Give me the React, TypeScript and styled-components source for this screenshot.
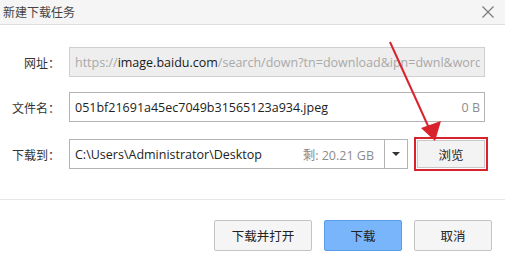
import React from "react";
import styled, { createGlobalStyle } from "styled-components";

const Global = createGlobalStyle`
  html, body { margin: 0; padding: 0; background: #fff; }
  body { font-family: "Open Sans", "Noto Sans CJK SC", sans-serif; color: #333; }
  * { box-sizing: border-box; }
`;

const Dialog = styled.div`
  position: relative;
  width: 505px;
  height: 270px;
  background: #fff;
  overflow: hidden;
`;

const TitleBar = styled.div`
  height: 25px;
  background: #f5f5f5;
  border-bottom: 1px solid #dedede;
  display: flex;
  align-items: center;
  justify-content: space-between;
  padding: 0 11px 1px 3px;
`;

const Title = styled.div`
  font-family: "Noto Sans CJK SC", sans-serif;
  font-size: 12px;
  color: #444;
`;

const Close = styled.svg`
  width: 12px;
  height: 12px;
  display: block;
`;

const Form = styled.div`
  display: grid;
  grid-template-columns: 60px minmax(0, 1fr);
  column-gap: 9px;
  row-gap: 15px;
  padding: 22px 20px 0 0;
  height: 174px;
  align-content: start;
`;

const Label = styled.div`
  font-family: "Noto Sans CJK SC", sans-serif;
  font-size: 12px;
  color: #333;
  text-align: right;
  align-self: center;
  white-space: nowrap;
`;

const FieldRow = styled.div`
  display: flex;
  gap: 6px;
  align-items: center;
  min-width: 0;
`;

const Field = styled.div<{ $disabled?: boolean; $width?: number }>`
  height: 30px;
  ${(p) => (p.$width ? `width: ${p.$width}px; flex: none;` : "flex: 1; min-width: 0;")}
  border: 1px solid ${(p) => (p.$disabled ? "#cfcfcf" : "#b4b4b4")};
  background: ${(p) => (p.$disabled ? "#eeeeee" : "#fff")};
  display: flex;
  align-items: center;
  padding: 0 4px 0 5px;
  font-size: 12.5px;
  color: #222;
  white-space: nowrap;
  overflow: hidden;
`;

const FieldText = styled.span`
  flex: 1;
  min-width: 0;
  overflow: hidden;
  white-space: nowrap;
`;

const Dim = styled.span`
  color: #a9a9a9;
`;

const Strong = styled.span`
  color: #1a1a1a;
`;

const Side = styled.span`
  color: #8c8c8c;
  flex: none;
  font-family: "Open Sans", "Noto Sans CJK SC", sans-serif;
`;

const Drop = styled.div`
  width: 23px;
  flex: none;
  align-self: stretch;
  border-left: 1px solid #b4b4b4;
  display: flex;
  align-items: center;
  justify-content: center;
  margin-right: -4px;
  margin-left: 10px;
`;

const Caret = styled.div`
  width: 0;
  height: 0;
  border-left: 4px solid transparent;
  border-right: 4px solid transparent;
  border-top: 4px solid #333;
`;

const Highlight = styled.div`
  border: 2px solid #d8232c;
  padding: 1px;
  width: 74px;
  height: 34px;
  flex: none;
  display: flex;
`;

const Button = styled.button<{ $primary?: boolean; $w?: number }>`
  width: ${(p) => p.$w ?? 78}px;
  height: 31px;
  font-family: "Noto Sans CJK SC", sans-serif;
  font-size: 12.5px;
  color: #222;
  border-radius: 2px;
  border: 1px solid ${(p) => (p.$primary ? "#5b9ce8" : "#c4c4c4")};
  background: ${(p) => (p.$primary ? "#78b5fb" : "#f5f5f5")};
  padding: 0;
  cursor: pointer;
`;

const BrowseButton = styled(Button)`
  flex: 1;
  height: auto;
  background: #f3f3f3;
  border-color: #c9c9c9;
  border-radius: 0;
`;

const Footer = styled.div`
  border-top: 1px solid #e7e7e7;
  display: flex;
  justify-content: flex-end;
  gap: 12px;
  padding: 20px 13px 0 0;
`;

const ArrowOverlay = styled.svg`
  position: absolute;
  left: 0;
  top: 0;
  pointer-events: none;
`;

export default function App() {
  return (
    <>
      <Global />
      <Dialog>
        <TitleBar>
          <Title>新建下载任务</Title>
          <Close viewBox="0 0 12 12">
            <path d="M0.5 0.5 L11.5 11.5 M11.5 0.5 L0.5 11.5" stroke="#777" strokeWidth="1.1" />
          </Close>
        </TitleBar>
        <Form>
          <Label>网址：</Label>
          <FieldRow>
            <Field $disabled>
              <FieldText>
                <Dim>https://</Dim>
                <Strong>image.baidu.com</Strong>
                <Dim>/search/down?tn=download&amp;ipn=dwnl&amp;word=download</Dim>
              </FieldText>
            </Field>
          </FieldRow>
          <Label>文件名：</Label>
          <FieldRow>
            <Field>
              <FieldText>051bf21691a45ec7049b31565123a934.jpeg</FieldText>
              <Side>0 B</Side>
            </Field>
          </FieldRow>
          <Label>下载到：</Label>
          <FieldRow>
            <Field $width={339}>
              <FieldText>C:\Users\Administrator\Desktop</FieldText>
              <Side>剩: 20.21 GB</Side>
              <Drop>
                <Caret />
              </Drop>
            </Field>
            <Highlight>
              <BrowseButton>浏览</BrowseButton>
            </Highlight>
          </FieldRow>
        </Form>
        <Footer>
          <Button $w={98}>下载并打开</Button>
          <Button $w={78} $primary>下载</Button>
          <Button $w={78}>取消</Button>
        </Footer>
        <ArrowOverlay width="505" height="270" viewBox="0 0 505 270">
          <line x1="390" y1="42" x2="429" y2="128" stroke="#d8232c" strokeWidth="2" />
          <polygon points="421,128 441,121 435,141" fill="#d8232c" />
        </ArrowOverlay>
      </Dialog>
    </>
  );
}
